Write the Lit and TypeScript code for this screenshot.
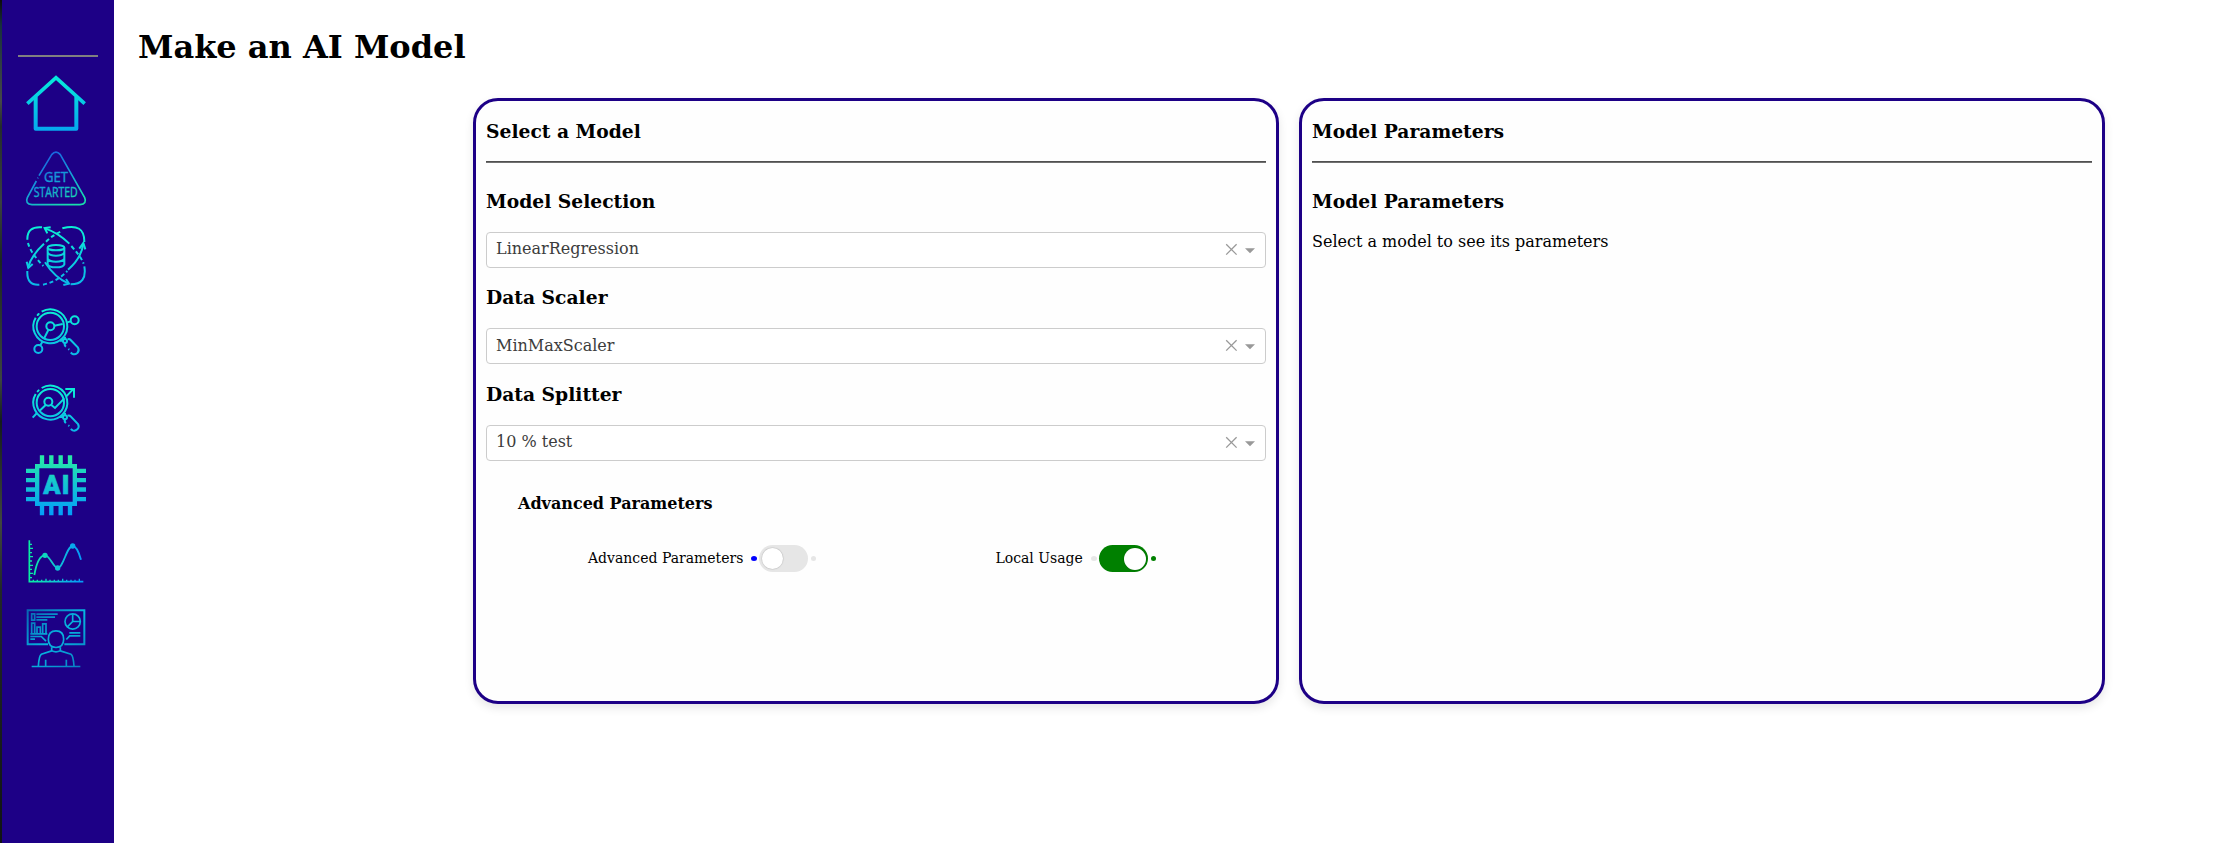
import { LitElement, html, css, svg } from "lit";
import { customElement, property } from "lit/decorators.js";

/* Gradient in drawing coordinates, so that every stroke of an icon shares it. */
const userGrad = (id: string, stops: string[], x1: number, y1: number, x2: number, y2: number) => svg`
  <linearGradient id=${id} gradientUnits="userSpaceOnUse" x1=${x1} y1=${y1} x2=${x2} y2=${y2}>
    ${stops.map((c, i) => svg`<stop offset=${i / (stops.length - 1)} stop-color=${c}></stop>`)}
  </linearGradient>`;

const lens = svg`
  <circle cx="151" cy="349" r="41"></circle>
  <path d="M125 305 A51 51 0 1 1 107 323"></path>
  <path d="M113 315 l3 -3" stroke-linecap="round"></path>
  <circle cx="195" cy="393" r="6"></circle>
  <path d="M186 385 l4 4 M180 392 h9 M195 380 v7 M203 388 q5 -2 9 2 l22 23 q5 9 -2 16 q-7 6 -14 3 l-6 -4 M195 399 q-3 7 3 11 M205 417 l3 2"></path>`;

const icons = [
  { box: "78 37 180 180", art: svg`
    <defs>${userGrad("g", ["#06e8dc", "#06aaee"], 0, 60, 0, 205)}</defs>
    <path d="M82 129 L168 51 L254 129" stroke-width="11"></path>
    <path d="M107 108 V204 H229 V108" stroke-width="12" stroke-linejoin="round"></path>` },
  { box: "78 268 180 180", art: svg`
    <defs>${userGrad("g", ["#1a62e0", "#149fd8", "#18e0ac"], 130, 285, 205, 440)}</defs>
    <path d="M117 348 L155 285 Q168 270 181 285 L254 414 Q262 432 240 435 H96 Q74 432 82 414 L109 364 M113 356 l1 -2" stroke-width="5"></path>
    <text x="132" y="366" font-size="44" textLength="72" lengthAdjust="spacingAndGlyphs">GET</text>
    <text x="101" y="413" font-size="41" textLength="132" lengthAdjust="spacingAndGlyphs">STARTED</text>` },
  { box: "78 47 180 180", art: svg`
    <defs>${userGrad("g", ["#0cf0d4", "#0bb8e8"], 0, 50, 0, 225)}</defs>
    <g stroke-width="6">
      <path d="M126 51 Q81 47 82 88 M187 54 Q254 36 253 95 M82 182 Q80 226 118 223 M212 222 Q262 222 253 168"></path>
      <path d="M135 156 Q164 202 206 220 M135 54 Q176 68 208 100"></path>
      <path d="M84 98 Q92 128 130 167 M214 107 Q242 138 251 160" stroke-dasharray="12 8"></path>
      <path d="M84 172 Q95 133 132 100 M204 178 Q244 144 250 100"></path>
      <path d="M138 94 Q160 73 186 62 M129 223 Q172 214 202 182" stroke-dasharray="12 8"></path>
      <path d="M152 51 L134 53 L142 69 M238 115 L250 98 L256 117 M80 154 L85 173 L98 161 M190 224 L207 220 L198 206"></path>
      <ellipse cx="168" cy="112" rx="25" ry="8"></ellipse>
      <path d="M143 112 V162 Q146 171 168 171 Q190 171 193 162 V112 M143 126 Q148 136 168 136 Q188 136 193 126 M143 145 Q148 154 168 154 Q188 154 193 145"></path>
    </g>` },
  { box: "78 276 180 180", art: svg`
    <defs>${userGrad("g", ["#0cf0d4", "#0bb8e8"], 0, 296, 0, 435)}</defs>
    <g stroke-width="6">${lens}
      <circle cx="151" cy="349" r="12"></circle><circle cx="224" cy="331" r="12"></circle><circle cx="115" cy="417" r="12"></circle>
      <path d="M163 347 L188 342 M202 337 L212 334 M145 360 L133 384 M127 396 L121 406"></path>
    </g>` },
  { box: "78 40 180 180", art: svg`
    <defs>${userGrad("g", ["#0cf0d4", "#0bb8e8"], 0, 296, 0, 435)}</defs>
    <g stroke-width="6" transform="translate(0 -235)">${lens}
      <circle cx="145" cy="346" r="12"></circle>
      <path d="M98 394 L111 380 M119 373 L137 356 M153 355 L165 365 L193 336 M199 330 L221 307 M196 308 H222 V334"></path>
    </g>` },
  { box: "78 269.5 180 180", art: svg`
    <defs>${userGrad("g", ["#27eaa6", "#13c4d4", "#04a0f8"], 0, 275, 0, 445)}</defs>
    <path d="M111.5 303 H224.500 V416 H111.500 Z" stroke-width="13"></path>
    <path d="M126 270 V300 M154 270 V300 M182 270 V300 M210 270 V300 M126 420 V450 M154 420 V450 M182 420 V450 M210 420 V450 M78 317 H108 M78 345 H108 M78 373 H108 M78 402 H108 M228 317 H258 M228 345 H258 M228 373 H258 M228 402 H258" stroke-width="13"></path>
    <text x="130" y="387" font-size="76" class="heavy">A</text>
    <text x="185" y="387" font-size="76" class="heavy">I</text>` },
  { box: "78 33 180 180", art: svg`
    <defs>${userGrad("g", ["#08f0a0", "#10c8d0", "#069cf8"], 85, 0, 240, 0)}</defs>
    <path d="M88 61 V185 H250" stroke-width="5"></path>
    <path d="M90 73 h6 M90 85 h9 M90 98 h6 M90 110 h9 M90 123 h6 M90 136 h9 M90 148 h6 M90 160 h9 M90 173 h6 M100 184 v-5 M112 184 v-5 M125 184 v-5 M138 184 v-8 M150 184 v-5 M163 184 v-5 M175 184 v-5 M188 184 v-8 M200 184 v-5 M213 184 v-5 M225 184 v-5 M238 184 v-8" stroke-width="4"></path>
    <path d="M103 165 C110 125 122 106 135 106 C150 106 160 144 173 144 C190 144 200 78 218 78 C230 78 237 98 243 119" stroke-width="5.500"></path>
    <g class="solid"><circle cx="135" cy="106" r="8"></circle><circle cx="173" cy="144" r="8"></circle><circle cx="218" cy="78" r="8"></circle></g>` },
  { box: "78 262.5 180 180", art: svg`
    <defs>${userGrad("g", ["#0868b4", "#06b8e0", "#0880c4"], 90, 270, 235, 440)}</defs>
    <path d="M144 371 H83 V269 H253 V371 H193" stroke-width="6"></path>
    <g stroke-width="5">
      <path d="M95 280 H104 V299 H95 Z M109 281 H173 M109 290 H165 M109 298 H142"></path>
      <path d="M91 340 H142 M95 338 V308 H104 V338 M111 338 V320 H121 V338 M128 338 V310 H138 V338"></path>
      <path d="M91 348 H124 L138 362 M91 356 H105 M208 337 H241 M241 346 H209 L199 357"></path>
      <circle cx="218" cy="303" r="23"></circle>
      <path d="M218 280 V303 H241 M218 303 L202 319"></path>
      <path d="M168 331 C151 331 145 343 145 356 C145 370 153 380 168 381 C183 380 191 370 191 356 C191 343 185 331 168 331 Z"></path>
      <path d="M155 380 V391 Q168 397 181 391 V380 M155 391 L124 401 Q117 405 115 437 M181 391 L213 401 Q220 405 222 437 M137 418 V437 M199 418 V437"></path>
      <path d="M95 438 H241"></path>
    </g>` },
];

@customElement("side-nav")
class SideNav extends LitElement {
  static styles = css`
    :host { display: flex; width: 114px; box-sizing: border-box; background: #1d0086; }
    .edge { width: 2px; background: linear-gradient(#0c0c0c 0, #17303c 3%, #2c3c42 7%, #454848 12%, #242c2c 15%, #3a4040 24%, #1c2620 31%, #3c4440 45%, #141c1c 50%, #40463f 62%, #222828 70%, #101414 100%); }
    .rail { flex: 1; padding: 55px 0 0; }
    .line { width: 80px; height: 2px; background: #808080; margin-left: 16px; }
    .items { display: flex; flex-direction: column; gap: 16.36px; margin: 16px 0 0 24px; }
  `;
  render() {
    return html`<div class="edge"></div>
      <nav class="rail">
        <div class="line"></div>
        <div class="items">${icons.map((i) => html`<nav-icon .box=${i.box} .art=${i.art}></nav-icon>`)}</div>
      </nav>`;
  }
}

/* Each icon has its own shadow root, which keeps the gradient id local. */
@customElement("nav-icon")
class NavIcon extends LitElement {
  @property() box = "";
  @property({ attribute: false }) art: unknown;
  static styles = css`
    :host { display: block; width: 60px; height: 60px; }
    svg { display: block; width: 60px; height: 60px; fill: none; stroke: url(#g); overflow: visible; }
    text { fill: url(#g); stroke: url(#g); stroke-width: 1.2; font-family: "Open Sans", sans-serif; }
    .heavy { font-family: Roboto, sans-serif; font-weight: 900; stroke-width: 2; }
    .solid { fill: url(#g); stroke: none; }
  `;
  render() {
    return html`<svg viewBox=${this.box}>${this.art}</svg>`;
  }
}

@customElement("select-box")
class SelectBox extends LitElement {
  @property() value = "";
  static styles = css`
    :host { display: flex; align-items: center; box-sizing: border-box; height: 36px; border: 1px solid #ccc; border-radius: 4px; background: #fff; padding: 0 10px 0 9px; }
    .value { flex: 1; color: #3c3c3c; font-size: 16px; line-height: 34px; padding-bottom: 1px; }
    svg { display: block; overflow: visible; }
  `;
  render() {
    return html`<span class="value">${this.value}</span>
      <svg width="30" height="12" viewBox="0 0 30 12">
        <path d="M1.200 0.200 L11.600 10.600 M11.600 0.200 L1.200 10.600" stroke="#999" stroke-width="1.300" fill="none"></path>
        <path d="M20 4.200 H30 L25 9.300 Z" fill="#999"></path>
      </svg>`;
  }
}

@customElement("toggle-switch")
class ToggleSwitch extends LitElement {
  @property() label = "";
  @property({ type: Boolean, reflect: true }) on = false;
  static styles = css`
    :host { display: flex; align-items: center; font-size: 14px; line-height: 17px; }
    .label { margin-right: 8px; }
    .dot { width: 6px; height: 5px; border-radius: 50%; background: #e6e6e6; }
    .before { background: #00f; margin-right: 2px; }
    .after { width: 5px; margin-left: 3px; }
    .track { display: flex; align-items: center; box-sizing: border-box; width: 49px; height: 27px; padding: 0 3px; border-radius: 14px; background: #e6e6e6; }
    .knob { width: 21px; height: 21px; border-radius: 50%; background: #fff; box-shadow: 0 0 1px 0.5px rgba(0, 0, 0, 0.15); }
    :host([on]) .before { background: #e6e6e6; }
    :host([on]) .after { background: green; }
    :host([on]) .track { background: green; justify-content: flex-end; padding: 0 2px; }
    :host([on]) .knob { width: 22px; height: 22px; }
  `;
  render() {
    return html`<span class="label">${this.label}</span><span class="dot before"></span>
      <span class="track"><span class="knob"></span></span><span class="dot after"></span>`;
  }
}

@customElement("app-root")
class AppRoot extends LitElement {
  static styles = css`
    :host { display: flex; height: 843px; background: #fff; color: #000; font-family: "DejaVu Serif", serif; overflow: hidden; }
    .main { flex: 1; }
    h1 { margin: 0; padding: 28px 0 0 24px; font-size: 32px; line-height: 38px; }
    .panels { display: flex; gap: 20px; margin: 32px 0 0 359px; }
    .panel { box-sizing: border-box; width: 806px; height: 606px; padding: 19px 10px 0; border: 3px solid #1d0086; border-radius: 25px; background: #fefefe; box-shadow: 0 4px 10px rgba(0, 0, 0, 0.1); }
    h3 { margin: 0; font-size: 18.72px; line-height: 22px; }
    .rule { height: 1px; margin: 19px 0 26.75px; background: #505050; border-bottom: 1px solid #707070; }
    .field + .field { margin-top: 18.5px; }
    select-box { margin-top: 20px; }
    h4 { margin: 33.25px 0 0 32px; font-size: 16px; line-height: 19px; }
    .switches { display: flex; margin: 32px 0 0 102px; gap: 179px; }
    p { margin: 20.25px 0 0; font-size: 16px; line-height: 19px; }
  `;
  render() {
    const fields = [["Model Selection", "LinearRegression"], ["Data Scaler", "MinMaxScaler"], ["Data Splitter", "10 % test"]];
    return html`<side-nav></side-nav>
      <main class="main">
        <h1>Make an AI Model</h1>
        <div class="panels">
          <section class="panel">
            <h3>Select a Model</h3>
            <div class="rule"></div>
            ${fields.map(([t, v]) => html`<div class="field"><h3>${t}</h3><select-box .value=${v}></select-box></div>`)}
            <h4>Advanced Parameters</h4>
            <div class="switches">
              <toggle-switch label="Advanced Parameters"></toggle-switch>
              <toggle-switch label="Local Usage" on></toggle-switch>
            </div>
          </section>
          <section class="panel">
            <h3>Model Parameters</h3>
            <div class="rule"></div>
            <h3>Model Parameters</h3>
            <p>Select a model to see its parameters</p>
          </section>
        </div>
      </main>`;
  }
}
